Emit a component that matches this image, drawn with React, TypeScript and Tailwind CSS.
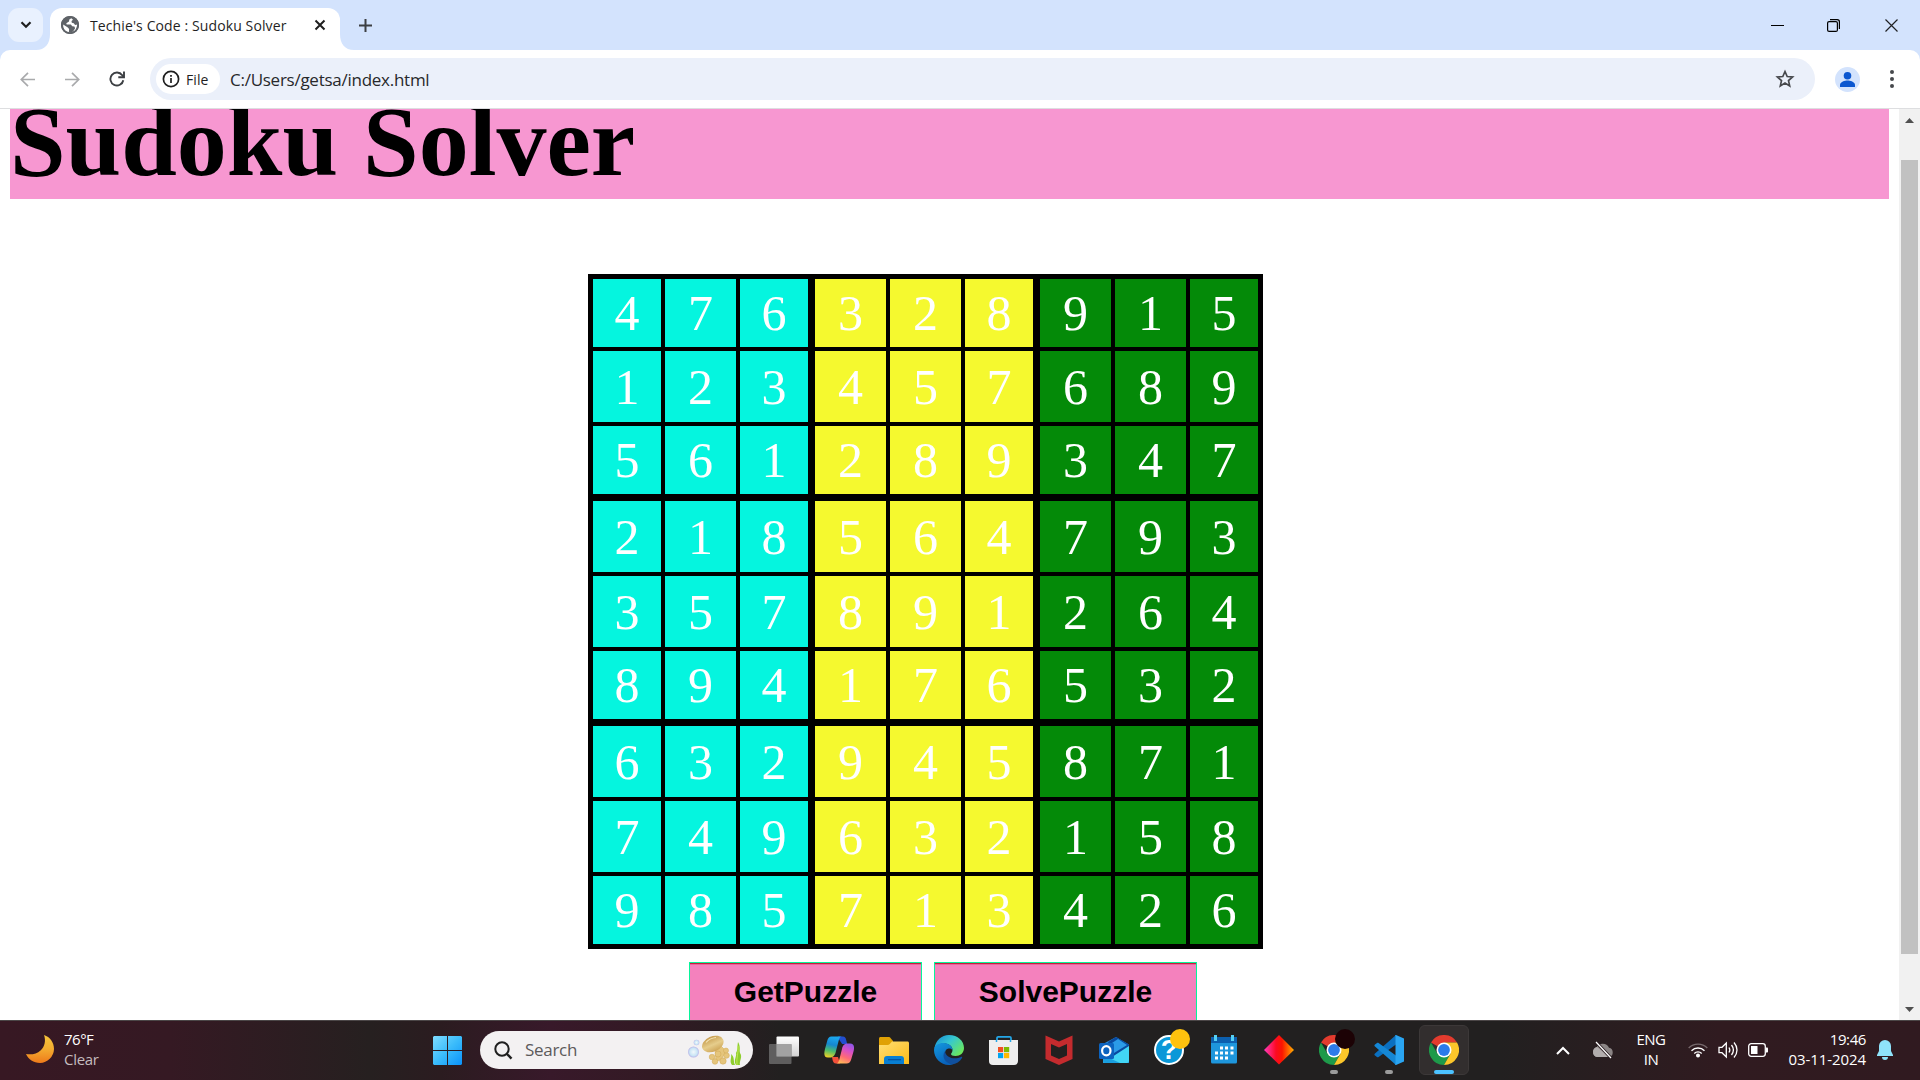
import React from "react";

const UI = "font-['Open_Sans','Noto_Sans',sans-serif]";

const BOARD = [
  [4, 7, 6, 3, 2, 8, 9, 1, 5],
  [1, 2, 3, 4, 5, 7, 6, 8, 9],
  [5, 6, 1, 2, 8, 9, 3, 4, 7],
  [2, 1, 8, 5, 6, 4, 7, 9, 3],
  [3, 5, 7, 8, 9, 1, 2, 6, 4],
  [8, 9, 4, 1, 7, 6, 5, 3, 2],
  [6, 3, 2, 9, 4, 5, 8, 7, 1],
  [7, 4, 9, 6, 3, 2, 1, 5, 8],
  [9, 8, 5, 7, 1, 3, 4, 2, 6],
];

const CELL_COLORS = ["bg-[#05f5df]", "bg-[#f5f92f]", "bg-[#048a08]"];

function TabStrip() {
  return (
    <div className="flex h-[50px] items-center bg-[#d3e3fd] pl-2">
      <button className="flex h-[34px] w-[35px] items-center justify-center rounded-[11px] bg-[#e9f1fe]">
        <svg width="12" height="8" viewBox="0 0 12 8" fill="none" stroke="#1f1f1f" strokeWidth="2.2">
          <path d="M1.5 1.3 6 5.8l4.500-4.500" />
        </svg>
      </button>
      <svg className="mt-auto ml-[-7px]" width="14" height="16" viewBox="0 0 14 16">
        <path d="M14 0v16H0C9 16 14 10 14 0z" fill="#fff" />
      </svg>
      <div className="mt-auto flex h-[42.500px] w-[290px] items-center rounded-t-[12px] bg-white pr-[14px] pb-[7px] pl-[11px]">
        <svg width="18" height="18" viewBox="0 0 18 18">
          <circle cx="9" cy="9" r="9" fill="#5f6368" />
          <path d="M10.300 2.300 8.300 3.600 8 5.600 5.300 7.200l.4 1.400h4.200l1.300 1.700 2.200.2.700 1.700-2 3.200-1.700.8-2.500-.3.200-2.900-1.300-1.500-4.600-2.900C1.700 13.500 5 16.400 9 16.400c2.200 0 4.200-1 5.500-2.500l1-2.200.8-3.100-2.200.3-1.300-1.600-2-.6-.3-1.700 1.500-1.300z" fill="#fff" />
          <circle cx="9" cy="9" r="8.200" fill="none" stroke="#5f6368" strokeWidth="1.700" />
        </svg>
        <span className={`${UI} mt-[2px] ml-[11px] text-[14px] leading-5 tracking-[0.11px] whitespace-nowrap text-[#1f1f1f]`}>Techie's Code : Sudoku Solver</span>
        <svg className="ml-auto" width="12" height="12" viewBox="0 0 12 12" stroke="#1f1f1f" strokeWidth="2">
          <path d="m1.500 1.500 9 9M10.500 1.500l-9 9" />
        </svg>
      </div>
      <svg className="mt-auto" width="14" height="16" viewBox="0 0 14 16">
        <path d="M0 0v16h14C5 16 0 10 0 0z" fill="#fff" />
      </svg>
      <svg className="ml-[5px]" width="13" height="13" viewBox="0 0 13 13" stroke="#3c3f43" strokeWidth="2">
        <path d="M6.500 0v13M0 6.500h13" />
      </svg>
      <div className="mr-[22px] ml-auto flex items-center gap-[43px]">
        <svg width="13" height="13" viewBox="0 0 13 13"><path d="M0 6.500h13" stroke="#000" /></svg>
        <svg width="13" height="13" viewBox="0 0 13 13" fill="none" stroke="#000" strokeWidth="1.200">
          <rect x=".6" y="2.600" width="9.800" height="9.800" rx="1.500" />
          <path d="M3 .6h7.200a2.200 2.200 0 0 1 2.200 2.200V10" />
        </svg>
        <svg className="ml-[2px]" width="13" height="13" viewBox="0 0 13 13" stroke="#202124" strokeWidth="1.200">
          <path d="m.5.5 12 12M12.500.5l-12 12" />
        </svg>
      </div>
    </div>
  );
}

function Toolbar() {
  return (
    <div className="h-[59px] bg-[#d3e3fd]">
      <div className={`${UI} flex h-[59px] items-center rounded-t-[10px] border-b border-[#dddee0] bg-white pl-5`}>
        <svg width="15" height="15" viewBox="0 0 15 15" fill="none" stroke="#a9aaac" strokeWidth="1.700">
          <path d="M15 7.500H1.500M8 .8 1.300 7.500 8 14.200" />
        </svg>
        <svg className="ml-[30px]" width="15" height="15" viewBox="0 0 15 15" fill="none" stroke="#a9aaac" strokeWidth="1.700">
          <path d="M0 7.500h13.500M7 .8l6.700 6.700L7 14.200" />
        </svg>
        <svg className="ml-[29px]" width="16" height="16" viewBox="0 0 16 16" fill="none" stroke="#3c3f43" strokeWidth="1.900">
          <path d="M14.300 9.200A6.500 6.500 0 1 1 13.200 4.200l1.500 1.700" />
          <path d="M15 .5v5.700H9.300" />
        </svg>
        <div className="ml-[25px] flex h-[42px] w-[1665px] items-center rounded-full bg-[#ebf0fa] pl-[6px]">
          <div className="flex h-[30px] w-16 items-center rounded-full bg-white pl-[6px]">
            <svg width="18" height="18" viewBox="0 0 18 18" fill="none" stroke="#1f1f1f" strokeWidth="1.700">
              <circle cx="9" cy="9" r="7.600" />
              <path d="M9 8v5M9 5v1.700" />
            </svg>
            <span className="ml-[6px] text-[14px] font-medium tracking-[0.1px] text-[#1f1f1f]">File</span>
          </div>
          <span className="mt-px ml-[10px] text-[17px] tracking-[-0.26px] text-[#27282b]">C:/Users/getsa/index.html</span>
          <svg className="mr-5 ml-auto" width="20" height="20" viewBox="0 0 20 20" fill="none" stroke="#46484c" strokeWidth="1.700">
            <path d="m10 2.500 2.200 5 5.400.5-4.100 3.600 1.200 5.300L10 14.100l-4.700 2.800 1.200-5.300L2.400 8l5.400-.5z" />
          </svg>
        </div>
        <svg className="ml-5" width="25" height="25" viewBox="0 0 25 25">
          <circle cx="12.500" cy="12.500" r="12.500" fill="#d3e3fd" />
          <circle cx="12.500" cy="8.700" r="3.800" fill="#0b57d0" />
          <path d="M5 20v-2c0-3 5-4.400 7.500-4.400S20 15 20 18v2z" fill="#0b57d0" />
        </svg>
        <svg className="ml-[30px]" width="4" height="18" viewBox="0 0 4 18" fill="#46484c">
          <circle cx="2" cy="2" r="2" /><circle cx="2" cy="9" r="2" /><circle cx="2" cy="16" r="2" />
        </svg>
      </div>
    </div>
  );
}

function Board() {
  return (
    <div className="mt-[75px] ml-[588px] grid h-[675px] w-[675px] grid-cols-[68px_71px_68px_74px_71px_68px_74px_71px_68px] grid-rows-[68px_71px_68px_74px_71px_68px_74px_71px_68px] gap-1 bg-black p-[5px]">
      {BOARD.flatMap((row, r) =>
        row.map((n, c) => (
          <div
            key={`${r}-${c}`}
            className={`flex items-center justify-center font-['Liberation_Serif',serif] text-[50px] leading-[56px] text-white ${CELL_COLORS[Math.floor(c / 3)]} ${c === 3 || c === 6 ? "ml-[3px]" : ""} ${r === 3 || r === 6 ? "mt-[3px]" : ""}`}
          >
            {n}
          </div>
        )),
      )}
    </div>
  );
}

function ActionButton({ label, width }: { label: string; width: string }) {
  return (
    <button className={`${width} h-[79px] border border-[#06f59a] bg-[#f481bd] font-['Liberation_Sans',sans-serif] text-[30px] font-bold text-black`}>
      <span className="flex h-full justify-center border-t border-[#c81e3c] pt-[8px] leading-[40px] shadow-[inset_0_1px_0_#e8629a]">
        {label}
      </span>
    </button>
  );
}

function Page() {
  return (
    <main className="flex h-[911px] overflow-hidden bg-white">
      <div className="h-[911px] w-[1899px] overflow-hidden">
        <div className="mr-[10px] ml-[10px] flex h-[90px] items-end bg-[#f797d1]">
          <h1 className="h-[115px] font-['Liberation_Serif',serif] text-[100px] leading-[115px] font-bold text-black">Sudoku Solver</h1>
        </div>
        <Board />
        <div className="mt-[13px] ml-[689px] flex gap-3">
          <ActionButton label="GetPuzzle" width="w-[233px]" />
          <ActionButton label="SolvePuzzle" width="w-[263px]" />
        </div>
      </div>
      <div className="flex w-[21px] flex-col items-center bg-[#f1f1f1] pt-[9px] pb-[8px]">
        <svg width="9" height="5" viewBox="0 0 9 5"><path d="M0 5 4.500 0 9 5z" fill="#505050" /></svg>
        <div className="mt-[37px] h-[794px] w-[17px] bg-[#c1c1c1]" />
        <svg className="mt-auto" width="9" height="5" viewBox="0 0 9 5"><path d="M0 0h9L4.500 5z" fill="#505050" /></svg>
      </div>
    </main>
  );
}

function Chrome() {
  return (
    <svg width="30" height="30" viewBox="0 0 30 30">
      <path d="M15 15 2 7.500A15 15 0 0 1 28 7.500H15z" fill="#e33b2e" />
      <path d="M15 15 8.500 18.800 2 7.500A15 15 0 0 0 15 30l6.500-11.200z" fill="#1e9a4a" />
      <path d="M15 7.500h13A15 15 0 0 1 15 30l6.500-11.200z" fill="#fcc62a" />
      <circle cx="15" cy="15" r="7.500" fill="#fff" />
      <circle cx="15" cy="15" r="5.900" fill="#2c7bea" />
    </svg>
  );
}

function Seascape() {
  return (
    <svg width="55" height="32" viewBox="0 0 55 32">
      <defs>
        <radialGradient id="bub"><stop offset="0" stopColor="#f2f8fb" /><stop offset=".7" stopColor="#c9e5f5" /><stop offset="1" stopColor="#b9b5e8" /></radialGradient>
        <linearGradient id="cap" x1="0" y1="0" x2="0" y2="1"><stop stopColor="#c79d4f" /><stop offset=".55" stopColor="#e6cd8c" /><stop offset="1" stopColor="#cfa75a" /></linearGradient>
      </defs>
      <circle cx="5.500" cy="18" r="5.500" fill="url(#bub)" />
      <circle cx="8.500" cy="8.500" r="2.800" fill="url(#bub)" />
      <g fill="#e5c57c" stroke="#d0a855" strokeWidth=".5">
        <path d="m27 15 1 12 5-1 5-9-5-5z" />
        <circle cx="24" cy="23" r="2.800" /><circle cx="27" cy="27.500" r="2.800" /><circle cx="35" cy="27" r="3.200" /><circle cx="38.500" cy="21.500" r="2.800" /><circle cx="38" cy="16.500" r="2.500" /><circle cx="30" cy="20" r="3" />
      </g>
      <ellipse cx="24.800" cy="10" rx="11.300" ry="7.600" transform="rotate(-24 24.800 10)" fill="url(#cap)" />
      <path d="M18 8.500c2-2.500 6-4.500 10-5" stroke="#f4e4b5" strokeWidth="1.200" fill="none" />
      <path d="M44 31c-3-4 0-7-1-11 4 3 2 7 4 11zM48 31c-3-5 1-8 0-12 2-3 1-6 2-11 3 5 1 8 2 11 3 4-1 8 0 12z" fill="#8fce2e" />
      <path d="M50 12c1 6-2 12-1 19" stroke="#c0e850" strokeWidth="1" fill="none" />
    </svg>
  );
}

function Badge({ color }: { color: string }) {
  return <span className={`absolute top-[-6px] left-4 size-5 rounded-full ${color}`} />;
}

function Running() {
  return <span className="absolute top-[35px] left-[11px] h-1 w-2 rounded-full bg-[#9b9b9b]" />;
}

function TaskIcons() {
  return (
    <div className="ml-4 flex items-center gap-[25px]">
      <svg width="30" height="30" viewBox="0 0 30 30">
        <defs><linearGradient id="tv" x2="0" y2="1"><stop stopColor="#fff" /><stop offset="1" stopColor="#d2d2d2" /></linearGradient></defs>
        <rect x="7.500" y="1.500" width="22.500" height="20" rx="1" fill="url(#tv)" />
        <rect x="0" y="9" width="22.500" height="20" rx="1" fill="#6a6a6a" fillOpacity=".85" />
        <path d="M7.500 9h15v12.500h-15z" fill="#a2a2a2" />
      </svg>
      <svg width="30" height="30" viewBox="0 0 30 30">
        <defs>
          <linearGradient id="cp1" x1=".3" y1="0" x2=".1" y2="1"><stop stopColor="#1ba6ee" /><stop offset=".35" stopColor="#1687cf" /><stop offset=".65" stopColor="#4ebd69" /><stop offset="1" stopColor="#ffd21e" /></linearGradient>
          <linearGradient id="cp2" x1=".8" y1="0" x2=".4" y2="1"><stop stopColor="#8c56e8" /><stop offset=".35" stopColor="#d750c8" /><stop offset=".7" stopColor="#ff6a76" /><stop offset="1" stopColor="#ffb35a" /></linearGradient>
        </defs>
        <path d="M14 1.500h5c2 0 2.600 1.500 3.200 3.500l1 4h-5L14 3z" fill="#224ed0" />
        <path d="M8 22h6l2 6.500h-4c-2.500 0-3-2-3.500-4z" fill="#f2503a" />
        <path d="M7.500 1.500H18c-2 0-2.800 2-3.300 4L12 16c-.8 4-2.500 6.500-6 6.500H4C-.5 22.500 0 18 1 14l2.200-8c.8-3 1.800-4.500 4.300-4.500z" fill="url(#cp1)" />
        <path d="M22.500 28.500H12c2 0 2.800-2 3.300-4L18 14c.8-4 2.500-5.500 6-5.500h2c4.500 0 4.500 4 3.500 8l-2.200 7.500c-.8 3-2.300 4.500-4.800 4.500z" fill="url(#cp2)" />
      </svg>
      <svg width="30" height="30" viewBox="0 0 30 30">
        <defs><linearGradient id="fe" x2="1" y2="1"><stop stopColor="#ffde75" /><stop offset="1" stopColor="#fdbb17" /></linearGradient></defs>
        <path d="M0 3.500C0 2.700.7 2 1.500 2h8c1 0 1.500.3 2 .9L14 6v6H0z" fill="#e0a105" />
        <path d="M0 10h8.500c1 0 1.700-.3 2.300-1L13 6.500h15.500c.8 0 1.500.7 1.500 1.500v21H0z" fill="url(#fe)" />
        <path d="M5 29v-5a3 3 0 0 1 3-3h14a3 3 0 0 1 3 3v5z" fill="#087fd4" />
        <path d="M9 24.700h13" stroke="#06509f" strokeWidth="1.200" />
      </svg>
      <svg width="30" height="30" viewBox="0 0 30 30">
        <defs>
          <linearGradient id="ed1" x1="0" y1="0" x2="1" y2=".7"><stop stopColor="#1689d8" /><stop offset=".5" stopColor="#36c7d0" /><stop offset="1" stopColor="#6be85c" /></linearGradient>
          <linearGradient id="ed2" x2=".5" y2="1"><stop stopColor="#1499df" /><stop offset="1" stopColor="#0861ba" /></linearGradient>
        </defs>
        <path d="M.5 13.500C1.500 5.500 7.500 0 15 0c9 0 15 6 15 13 0 5-3.800 8-8.500 8-3 0-4.500-1-4.500-2 0-.8 1.500-1.500 1.500-4 0-4-4-6.500-8.500-6.500-4 0-7.500 2-9.500 5z" fill="url(#ed1)" />
        <path d="M0 15C0 10 4.500 8 9.500 8c5 0 9 3 9 7-1-2-7-3-7.500 3-.4 5 5 10 9 10.500C18 30 16 30 15 30 6.500 30 0 23 0 15z" fill="url(#ed2)" />
        <path d="M11 16c-4 6 .5 12 7 13.500 4-.5 8-3 10-6.500.6-1-.3-1.500-1-1-6 3-15.500 1-16-6z" fill="#10509e" />
      </svg>
      <svg width="30" height="30" viewBox="0 0 30 30">
        <path d="M8 6V3c0-.8.500-1.200 1.200-1.200h11.600c.7 0 1.200.4 1.200 1.200v3" fill="none" stroke="#24a7e8" strokeWidth="1.700" />
        <path d="M0 5h29v21a4 4 0 0 1-4 4H4a4 4 0 0 1-4-4z" fill="#eee" />
        <path d="M7.500 5v2M21.500 5v2" stroke="#24a7e8" strokeWidth="1.500" />
        <path d="M9 12h5.200v5.200H9z" fill="#f25022" /><path d="M15 12h5.200v5.200H15z" fill="#7fba00" /><path d="M9 18h5.200v5.200H9z" fill="#00a4ef" /><path d="M15 18h5.200v5.200H15z" fill="#ffb900" />
      </svg>
      <svg width="30" height="30" viewBox="0 0 30 30">
        <path d="M1.500.5 15 6.500l13.500-6V24L15 30 1.500 24zM7 9v11.500l8 3.500 8-3.500V9l-8 3.500z" fill="#c42b2e" fillRule="evenodd" />
      </svg>
      <svg width="30" height="30" viewBox="0 0 30 30">
        <path d="M4 9 17 2l13 7.500V28H4z" fill="#2188d8" />
        <path d="m9 7 8-5 13 7.500V15L14 24z" fill="#0a4aa0" />
        <path d="m13 8 6-4 9 6-13 8z" fill="#2b9be8" />
        <path d="M30 11v15a2 2 0 0 1-2 2H6a2 2 0 0 1-2-2l9-4z" fill="#42d5f5" />
        <path d="m4 20 17 8H6a2 2 0 0 1-2-2z" fill="#1a9fe0" />
        <rect x="0" y="8" width="15" height="16" rx="1.500" fill="#0c63bf" />
        <ellipse cx="7.300" cy="15.800" rx="4.200" ry="4.600" fill="none" stroke="#fff" strokeWidth="2.200" />
      </svg>
      <div className="relative">
        <div className="flex size-[30px] items-center justify-center rounded-full border-2 border-white bg-[#0a98d8] font-['Liberation_Sans',sans-serif] text-[27px] leading-none font-bold text-white">?</div>
        <Badge color="bg-[#ffc20e]" />
      </div>
      <svg width="30" height="30" viewBox="0 0 30 30">
        <path d="M2 2h26v25a1.500 1.500 0 0 1-1.500 1.500h-23A1.500 1.500 0 0 1 2 27z" fill="#1e96dc" />
        <path d="M2 2h26v6H2z" fill="#0c5fae" />
        <path d="M5 0h3v6H5zM22 0h3v6h-3z" fill="#55d0f5" />
        <g fill="#fff">
          <path d="M11 11.500h3v3h-3zM16 11.500h3v3h-3zM21.500 11.500h3v3h-3zM6 16.500h3v3H6zM11 16.500h3v3h-3zM16 16.500h3v3h-3zM21.500 16.500h3v3h-3zM6 21.500h3v3H6zM11 21.500h3v3h-3zM16 21.500h3v3h-3z" />
        </g>
      </svg>
      <svg width="30" height="30" viewBox="0 0 30 30">
        <defs><linearGradient id="dm"><stop stopColor="#ff3bc0" /><stop offset=".4" stopColor="#fb0a22" /><stop offset=".6" stopColor="#fb1500" /><stop offset="1" stopColor="#ffb000" /></linearGradient></defs>
        <path d="m15 0 15 15-15 14.500L0 15z" fill="url(#dm)" />
      </svg>
      <div className="relative"><Chrome /><Badge color="bg-[#1c0205]" /><Running /></div>
      <div className="relative">
        <svg width="30" height="30" viewBox="0 0 30 30">
          <path d="M22 0 1 18.500c-.8.700-.8 1.500 0 2l2 1.500c.6.400 1 .300 1.600 0L24 8z" fill="#0b70c0" />
          <path d="M22 30 1 11.500c-.8-.7-.8-1.500 0-2L3 8c.6-.4 1-.3 1.600 0L24 22z" fill="#1587d5" />
          <path d="M22 0 30 3.500v23L22 30c-1 .3-1 0-.5-1V1c-.5-1-.3-1.200.5-1z" fill="#2aa5f2" />
        </svg>
        <Running />
      </div>
      <div className="relative -m-[10px] rounded-[6px] border border-[#3c3838] bg-[#322e2e] p-[9px]">
        <Chrome />
        <span className="absolute top-[44px] left-[14px] h-1 w-5 rounded-full bg-[#4cc2ff]" />
      </div>
    </div>
  );
}

function Tray() {
  return (
    <div className="mr-[27px] ml-auto flex items-center text-[15px] leading-5 text-white">
      <svg width="14" height="9" viewBox="0 0 14 9" fill="none" stroke="#fff" strokeWidth="2"><path d="m1 8 6-6 6 6" /></svg>
      <svg className="ml-[22px]" width="22" height="18" viewBox="0 0 22 18">
        <path d="M5 16a5 5 0 0 1-.5-9.500A7 7 0 0 1 17 6.800 4.700 4.700 0 0 1 17 16z" fill="#8b8585" />
        <path d="M1 11a4.500 4.500 0 0 1 4-5l13 10H5a4.500 4.500 0 0 1-4-5z" fill="#b2adad" />
        <path d="m4 1 15 16" stroke="#2a1c20" strokeWidth="3" /><path d="m4 1 15 16" stroke="#fff" strokeWidth="1.200" />
      </svg>
      <div className="mb-[2px] ml-[22px] w-[30px] text-center tracking-[-0.5px]"><div>ENG</div><div>IN</div></div>
      <svg className="ml-[22px]" width="20" height="16" viewBox="0 0 20 16" fill="none" stroke="#fff" strokeWidth="1.400">
        <path d="M.7 6a13 13 0 0 1 18.600 0" stroke="#776a6d" />
        <path d="M3.500 8.700a9.200 9.200 0 0 1 13 0M6.300 11.400a5.300 5.300 0 0 1 7.400 0" />
        <circle cx="10" cy="13.500" r="1.300" fill="#fff" />
      </svg>
      <svg className="ml-[10px]" width="20" height="18" viewBox="0 0 20 18" fill="none" stroke="#fff" strokeWidth="1.300">
        <path d="M1 6.300h3L8.300 2v14L4 11.700H1z" />
        <path d="M11 6.500c1 1.500 1 3.500 0 5M13.500 4c2.300 3 2.300 7 0 10M16 1.500c4 4.500 4 10.500 0 15" />
      </svg>
      <svg className="ml-[10px]" width="21" height="14" viewBox="0 0 21 14">
        <rect x=".7" y=".7" width="16.600" height="12.600" rx="2.500" fill="none" stroke="#fff" strokeWidth="1.300" />
        <path d="M3 3h6.500v8H3z" fill="#fff" /><path d="M18 4.500h1.200c.5 0 .8.300.8.800v3.400c0 .5-.3.800-.8.800H18z" fill="#fff" />
      </svg>
      <div className="mb-[2px] ml-[16px] w-[81px] text-right tracking-[-0.08px] whitespace-nowrap"><div className="tracking-[-0.4px]">19:46</div><div>03-11-2024</div></div>
      <svg className="ml-[11px]" width="16" height="20" viewBox="0 0 16 20" fill="#8fe3fb">
        <path d="M8 0a6 6 0 0 1 6 6v5l2 4v1H0v-1l2-4V6a6 6 0 0 1 6-6zM5 17h6a3 3 0 0 1-6 0z" />
      </svg>
    </div>
  );
}

function Taskbar() {
  return (
    <footer className={`${UI} flex h-[60px] items-center border-t border-[#4b4647] bg-[linear-gradient(90deg,#371823_0px,#351923_170px,#262020_370px,#2b1c20_440px,#38192a_550px,#331a24_650px,#222020_780px,#222020_1500px,#301b20_1720px,#301a20_1920px)] pb-px pl-[26px]`}>
      <svg className="-mt-[1px]" width="29" height="29" viewBox="0 0 29 29">
        <defs><linearGradient id="mn" x2="0" y2="1"><stop stopColor="#f7c63c" /><stop offset=".5" stopColor="#f3ac30" /><stop offset="1" stopColor="#ee7a1b" /></linearGradient></defs>
        <path d="M18 0c6 2 10 7.500 10 14a14.500 14.500 0 0 1-14 14C7.500 28 2.500 24.500 0 19c5 1 11 0 14.500-3.500C19 11.500 20 5.500 18 0z" fill="url(#mn)" />
      </svg>
      <div className="mb-[3px] ml-[9px] w-[61px] text-[15px] leading-5 tracking-[-0.5px]">
        <div className="text-white">76°F</div>
        <div className="tracking-[-0.3px] text-[#c4bcbf]">Clear</div>
      </div>
      <svg className="ml-[308px]" width="29" height="29" viewBox="0 0 29 29">
        <defs><linearGradient id="win" x2="1" y2="1"><stop stopColor="#7fdcff" /><stop offset=".5" stopColor="#3bbcfb" /><stop offset="1" stopColor="#0a92fa" /></linearGradient></defs>
        <path d="M1 0h13v14H0V1zM15 0h13l1 1v13H15zM0 15h14v14H1l-1-1zM15 15h14v13l-1 1H15z" fill="url(#win)" />
      </svg>
      <div className="ml-[18px] flex h-[38px] w-[273px] items-center rounded-full bg-[#f3f1f2] pr-[10px] pl-[14px]">
        <svg width="19" height="19" viewBox="0 0 19 19" fill="none" stroke="#1f1f1f" strokeWidth="2">
          <circle cx="8" cy="8" r="6.700" /><path d="m12.500 12.500 5 5.200" strokeWidth="2.400" />
        </svg>
        <span className="ml-[12px] text-[17px] tracking-[-0.3px] text-[#5c5a5b]">Search</span>
        <span className="ml-auto"><Seascape /></span>
      </div>
      <TaskIcons />
      <Tray />
    </footer>
  );
}

export default function App() {
  return (
    <div className="flex h-[1080px] w-[1920px] flex-col overflow-hidden bg-white">
      <TabStrip />
      <Toolbar />
      <Page />
      <Taskbar />
    </div>
  );
}
